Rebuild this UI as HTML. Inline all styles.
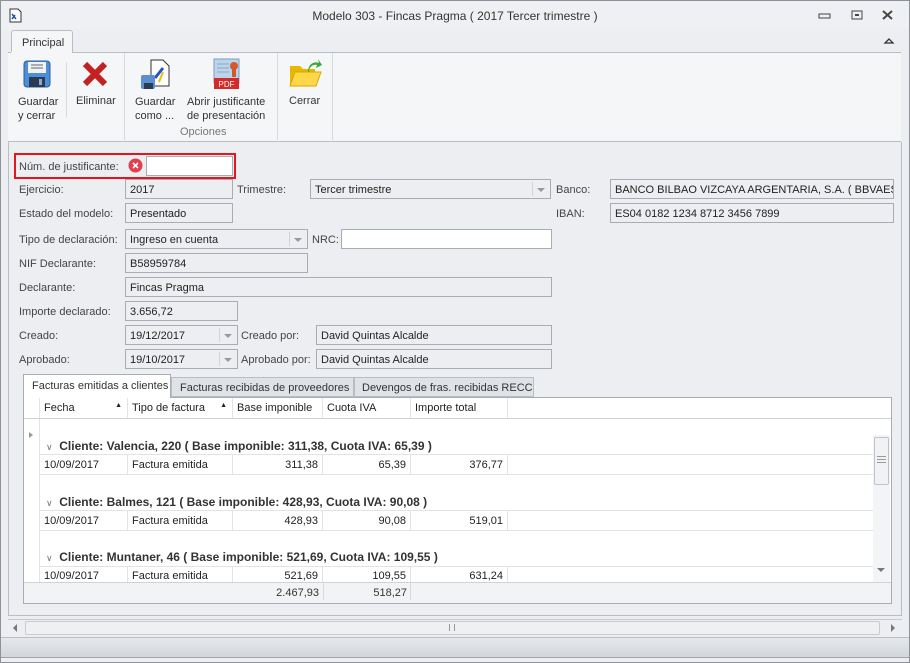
<!DOCTYPE html><html><head><meta charset="utf-8"><style>
*{box-sizing:border-box;margin:0;padding:0}
body{width:910px;height:663px;background:#eceef1;font-family:"Liberation Sans",sans-serif;font-size:11px;color:#333;position:relative;overflow:hidden}
.a{position:absolute;white-space:nowrap}
.f{position:absolute;height:20px;border:1px solid #a8acb3;background:#eceef1;padding:4px 0 0 4px;white-space:nowrap;overflow:hidden;color:#222}
.w{background:#fff}
.cb::after{content:"";position:absolute;right:5px;top:8px;border:4px solid transparent;border-top:4px solid #999;border-bottom:0}
.cb::before{content:"";position:absolute;right:17px;top:2px;height:14px;border-left:1px solid #d0d3d8}
.l{position:absolute;white-space:nowrap;color:#444}
.g{position:absolute;height:20px;border-bottom:1px solid #e1e3e6;background:#fff}
.c{position:absolute;top:0;height:20px;border-right:1px solid #e1e3e6;padding:4px 4px;white-space:nowrap;color:#222}
.r{text-align:right}
.gh{position:absolute;left:46px;font-weight:bold;color:#333;white-space:nowrap;font-size:12px}
</style></head><body>
<div class="a" style="left:0;top:0;width:910px;height:663px;border:1px solid #8d929a"></div>
<div class="a" style="left:1px;top:1px;width:908px;height:28px;background:#eef0f3"></div>
<svg class="a" style="left:9px;top:8px" width="13" height="15"><path d="M1 1h8l3 3v10H1z" fill="#fff" stroke="#333"/><path d="M3 6l4 5M3 11l3-4" stroke="#2255aa" stroke-width="1.5"/></svg>
<div class="a" style="left:0;width:910px;top:9px;text-align:center;color:#333;font-size:12px">Modelo 303 - Fincas Pragma ( 2017 Tercer trimestre )</div>
<svg class="a" style="left:818px;top:9px" width="85" height="14"><rect x="1" y="5" width="11" height="4" fill="none" stroke="#444"/><rect x="34" y="2" width="10" height="8" fill="none" stroke="#444"/><rect x="37" y="5" width="4" height="2" fill="#444"/><path d="M65 2l9 8M74 2l-9 8" stroke="#444" stroke-width="2"/></svg>
<svg class="a" style="left:883px;top:36px" width="12" height="10"><path d="M2 7l4-4 4 4z" fill="none" stroke="#333" stroke-width="1.3"/></svg>
<div class="a" style="left:11px;top:30px;width:62px;height:23px;background:#f5f6f8;border:1px solid #b9bdc4;border-bottom:none;border-radius:3px 3px 0 0;padding:6px 0 0 10px;color:#333">Principal</div>
<div class="a" style="left:8px;top:52px;width:893px;height:90px;background:#f5f6f8;border-top:1px solid #b9bdc4;border-bottom:1px solid #b9bdc4"></div>
<div class="a" style="left:11px;top:52px;width:61px;height:2px;background:#f5f6f8"></div>
<div class="a" style="left:66px;top:62px;height:55px;border-left:1px solid #d6d9de"></div>
<div class="a" style="left:124px;top:53px;height:87px;border-left:1px solid #d6d9de"></div>
<div class="a" style="left:277px;top:53px;height:87px;border-left:1px solid #d6d9de"></div>
<div class="a" style="left:332px;top:53px;height:87px;border-left:1px solid #d6d9de"></div>
<svg class="a" style="left:23px;top:60px" width="28" height="28"><rect x="1" y="1" width="26" height="26" rx="3" fill="#4a8fd8" stroke="#2a5e9e"/><rect x="5" y="2" width="18" height="11" fill="#eef3fa"/><path d="M8 5h12M8 8h12" stroke="#666"/><rect x="6" y="17" width="16" height="10" fill="#2a3b55"/><rect x="16" y="19" width="3" height="6" fill="#9ab"/></svg>
<svg class="a" style="left:82px;top:61px" width="26" height="26"><path d="M3 3l20 20M23 3L3 23" stroke="#c42222" stroke-width="6"/></svg>
<svg class="a" style="left:139px;top:58px" width="32" height="32"><path d="M12 2h12l6 6v20H12z" fill="#fff" stroke="#333"/><path d="M16 20l8-10" stroke="#2255cc" stroke-width="3"/><path d="M24 14l-4 10" stroke="#e8c000" stroke-width="2"/><rect x="2" y="17" width="14" height="14" rx="2" fill="#5a8fd0"/><rect x="5" y="25" width="9" height="6" fill="#2a3b55"/></svg>
<svg class="a" style="left:213px;top:58px" width="27" height="32"><rect x="1" y="1" width="25" height="24" fill="#bcd3ea" stroke="#7a9cc0"/><path d="M4 6h12M4 10h12M4 14h12" stroke="#8aa8c8"/><circle cx="21" cy="8" r="4" fill="#d05a2a"/><rect x="19" y="10" width="4" height="9" fill="#d05a2a"/><rect x="1" y="20" width="25" height="11" fill="#d42a2a"/><text x="13.5" y="29" font-size="8" fill="#fff" text-anchor="middle" font-family="Liberation Sans">PDF</text></svg>
<svg class="a" style="left:288px;top:58px" width="34" height="32"><path d="M2 8h10l3 3h12v17H2z" fill="#e8b800"/><path d="M2 28l5-14h26l-5 14z" fill="#ffd84a" stroke="#d9a800"/><path d="M20 14c0-8 6-11 11-9l-1-4 4 6-6 3 1-3c-4-1-8 2-8 7z" fill="#3aa83a"/></svg>
<div class="a" style="left:18px;top:95px;line-height:14px;color:#333">Guardar<br>y cerrar</div>
<div class="a" style="left:76px;top:95px;color:#333">Eliminar</div>
<div class="a" style="left:135px;top:95px;line-height:14px;color:#333">Guardar<br>como ...</div>
<div class="a" style="left:187px;top:95px;line-height:14px;color:#333">Abrir justificante<br>de presentación</div>
<div class="a" style="left:289px;top:95px;color:#333">Cerrar</div>
<div class="a" style="left:180px;top:126px;color:#777">Opciones</div>
<div class="a" style="left:8px;top:142px;width:894px;height:474px;border:1px solid #b9bdc4;border-top:none"></div>
<div class="a" style="left:14px;top:153px;width:222px;height:26px;border:2px solid #e8141b"></div>
<div class="l" style="left:19px;top:161px">Núm. de justificante:</div>
<svg class="a" style="left:128px;top:158px" width="15" height="15"><circle cx="7.5" cy="7.5" r="7" fill="#e04050"/><path d="M5 5l5 5M10 5l-5 5" stroke="#fff" stroke-width="1.6"/></svg>
<div class="f w" style="left:146px;top:156px;width:87px"></div>
<div class="l" style="left:19px;top:184px">Ejercicio:</div><div class="f" style="left:125px;top:179px;width:108px">2017</div>
<div class="l" style="left:237px;top:184px">Trimestre:</div><div class="f cb" style="left:310px;top:179px;width:241px">Tercer trimestre</div>
<div class="l" style="left:556px;top:184px">Banco:</div><div class="f" style="left:610px;top:179px;width:284px">BANCO BILBAO VIZCAYA ARGENTARIA, S.A. ( BBVAESMM</div>
<div class="l" style="left:19px;top:208px">Estado del modelo:</div><div class="f" style="left:125px;top:203px;width:108px">Presentado</div>
<div class="l" style="left:556px;top:208px">IBAN:</div><div class="f" style="left:610px;top:203px;width:284px">ES04 0182 1234 8712 3456 7899</div>
<div class="l" style="left:19px;top:234px">Tipo de declaración:</div><div class="f cb" style="left:125px;top:229px;width:183px">Ingreso en cuenta</div>
<div class="l" style="left:312px;top:234px">NRC:</div><div class="f w" style="left:341px;top:229px;width:211px"></div>
<div class="l" style="left:19px;top:258px">NIF Declarante:</div><div class="f" style="left:125px;top:253px;width:183px">B58959784</div>
<div class="l" style="left:19px;top:282px">Declarante:</div><div class="f" style="left:125px;top:277px;width:427px">Fincas Pragma</div>
<div class="l" style="left:19px;top:306px">Importe declarado:</div><div class="f" style="left:125px;top:301px;width:113px">3.656,72</div>
<div class="l" style="left:19px;top:330px">Creado:</div><div class="f cb" style="left:125px;top:325px;width:113px">19/12/2017</div>
<div class="l" style="left:241px;top:330px">Creado por:</div><div class="f" style="left:316px;top:325px;width:236px">David Quintas Alcalde</div>
<div class="l" style="left:19px;top:354px">Aprobado:</div><div class="f cb" style="left:125px;top:349px;width:113px">19/10/2017</div>
<div class="l" style="left:241px;top:354px">Aprobado por:</div><div class="f" style="left:316px;top:349px;width:236px">David Quintas Alcalde</div>
<div class="a" style="left:23px;top:397px;width:869px;height:207px;border:1px solid #a8acb3;background:#fff"></div>
<div class="a" style="left:171px;top:377px;width:183px;height:20px;border:1px solid #b9bdc4;background:#dfe2e7;padding:4px 0 0 8px;color:#333">Facturas recibidas de proveedores</div>
<div class="a" style="left:354px;top:377px;width:180px;height:20px;border:1px solid #b9bdc4;background:#dfe2e7;padding:4px 0 0 7px;color:#333">Devengos de fras. recibidas RECC</div>
<div class="a" style="left:23px;top:374px;width:148px;height:24px;border:1px solid #a8acb3;border-bottom:none;background:#fff;padding:5px 0 0 8px;color:#333">Facturas emitidas a clientes</div>
<div class="a" style="left:24px;top:398px;width:867px;height:21px;background:#fff;border-bottom:1px solid #cfd2d6"></div>
<div class="g" style="left:24px;top:398px;width:484px;border:none;background:transparent">
<div class="c" style="left:0;width:16px"></div>
<div class="c" style="left:16px;width:88px">Fecha<span style="position:absolute;right:5px;top:4px;font-size:7px">▲</span></div>
<div class="c" style="left:104px;width:105px">Tipo de factura<span style="position:absolute;right:5px;top:4px;font-size:7px">▲</span></div>
<div class="c" style="left:209px;width:90px">Base imponible</div>
<div class="c" style="left:299px;width:88px">Cuota IVA</div>
<div class="c" style="left:387px;width:97px">Importe total</div></div>
<div class="a" style="left:24px;top:419px;width:16px;height:164px;background:#fff;border-right:1px solid #e1e3e6"></div>
<div class="a" style="left:29px;top:432px;border:3px solid transparent;border-left:4px solid #999"></div>
<div class="gh" style="top:439px"><span style="font-weight:normal;color:#777;font-size:9px">∨</span>&nbsp; Cliente: Valencia, 220 ( Base imponible: 311,38, Cuota IVA: 65,39 )</div>
<div class="a" style="left:40px;top:454px;width:833px;border-top:1px solid #e1e3e6"></div>
<div class="g" style="left:40px;top:455px;width:833px"><div class="c" style="left:0;width:88px">10/09/2017</div><div class="c" style="left:88px;width:105px">Factura emitida</div><div class="c r" style="left:193px;width:90px">311,38</div><div class="c r" style="left:283px;width:88px">65,39</div><div class="c r" style="left:371px;width:97px">376,77</div></div>
<div class="gh" style="top:495px"><span style="font-weight:normal;color:#777;font-size:9px">∨</span>&nbsp; Cliente: Balmes, 121 ( Base imponible: 428,93, Cuota IVA: 90,08 )</div>
<div class="a" style="left:40px;top:510px;width:833px;border-top:1px solid #e1e3e6"></div>
<div class="g" style="left:40px;top:511px;width:833px"><div class="c" style="left:0;width:88px">10/09/2017</div><div class="c" style="left:88px;width:105px">Factura emitida</div><div class="c r" style="left:193px;width:90px">428,93</div><div class="c r" style="left:283px;width:88px">90,08</div><div class="c r" style="left:371px;width:97px">519,01</div></div>
<div class="gh" style="top:550px"><span style="font-weight:normal;color:#777;font-size:9px">∨</span>&nbsp; Cliente: Muntaner, 46 ( Base imponible: 521,69, Cuota IVA: 109,55 )</div>
<div class="a" style="left:40px;top:566px;width:833px;border-top:1px solid #e1e3e6"></div>
<div class="g" style="left:40px;top:567px;width:833px;height:16px;overflow:hidden;border:none"><div class="c" style="left:0;width:88px;top:-1px">10/09/2017</div><div class="c" style="left:88px;width:105px;top:-1px">Factura emitida</div><div class="c r" style="left:193px;width:90px;top:-1px">521,69</div><div class="c r" style="left:283px;width:88px;top:-1px">109,55</div><div class="c r" style="left:371px;width:97px;top:-1px">631,24</div></div>
<div class="a" style="left:873px;top:435px;width:17px;height:148px;background:#f3f4f6"></div>
<div class="a" style="left:874px;top:437px;width:15px;height:48px;border:1px solid #bfc3c9;border-radius:2px;background:#f1f2f4"></div>
<div class="a" style="left:877px;top:456px;width:9px;height:7px;border-top:1px solid #999;border-bottom:1px solid #999"></div>
<div class="a" style="left:877px;top:459px;width:9px;border-top:1px solid #999"></div>
<div class="a" style="left:877px;top:568px;border:4px solid transparent;border-top:4px solid #777;border-bottom:0"></div>
<div class="a" style="left:24px;top:582px;width:867px;height:21px;background:#f2f3f5;border-top:1px solid #cfd2d6"></div>
<div class="a" style="left:233px;top:587px;width:90px;text-align:right;padding-right:4px;color:#333">2.467,93</div>
<div class="a" style="left:323px;top:583px;height:17px;border-left:1px solid #d6d9de"></div>
<div class="a" style="left:323px;top:587px;width:88px;text-align:right;padding-right:4px;color:#333">518,27</div>
<div class="a" style="left:410px;top:583px;height:17px;border-left:1px solid #d6d9de"></div>
<div class="a" style="left:8px;top:619px;width:894px;height:15px;background:#eceef1;border-top:1px solid #c6c9ce"></div>
<div class="a" style="left:25px;top:621px;width:855px;height:14px;border:1px solid #c8cbd0;border-radius:2px;background:#eef0f2"></div>
<div class="a" style="left:449px;top:624px;width:6px;height:7px;border-left:1px solid #999;border-right:1px solid #999"></div>
<div class="a" style="left:13px;top:624px;border:4px solid transparent;border-right:4px solid #777;border-left:0"></div>
<div class="a" style="left:891px;top:624px;border:4px solid transparent;border-left:4px solid #777;border-right:0"></div>
<div class="a" style="left:1px;top:637px;width:908px;height:20px;background:linear-gradient(#e6e8eb,#d3d6db);border-top:1px solid #b9bdc4"></div>
<div class="a" style="left:1px;top:657px;width:908px;height:5px;background:#eceef1;border-top:1px solid #a0a4aa"></div>
</body></html>
